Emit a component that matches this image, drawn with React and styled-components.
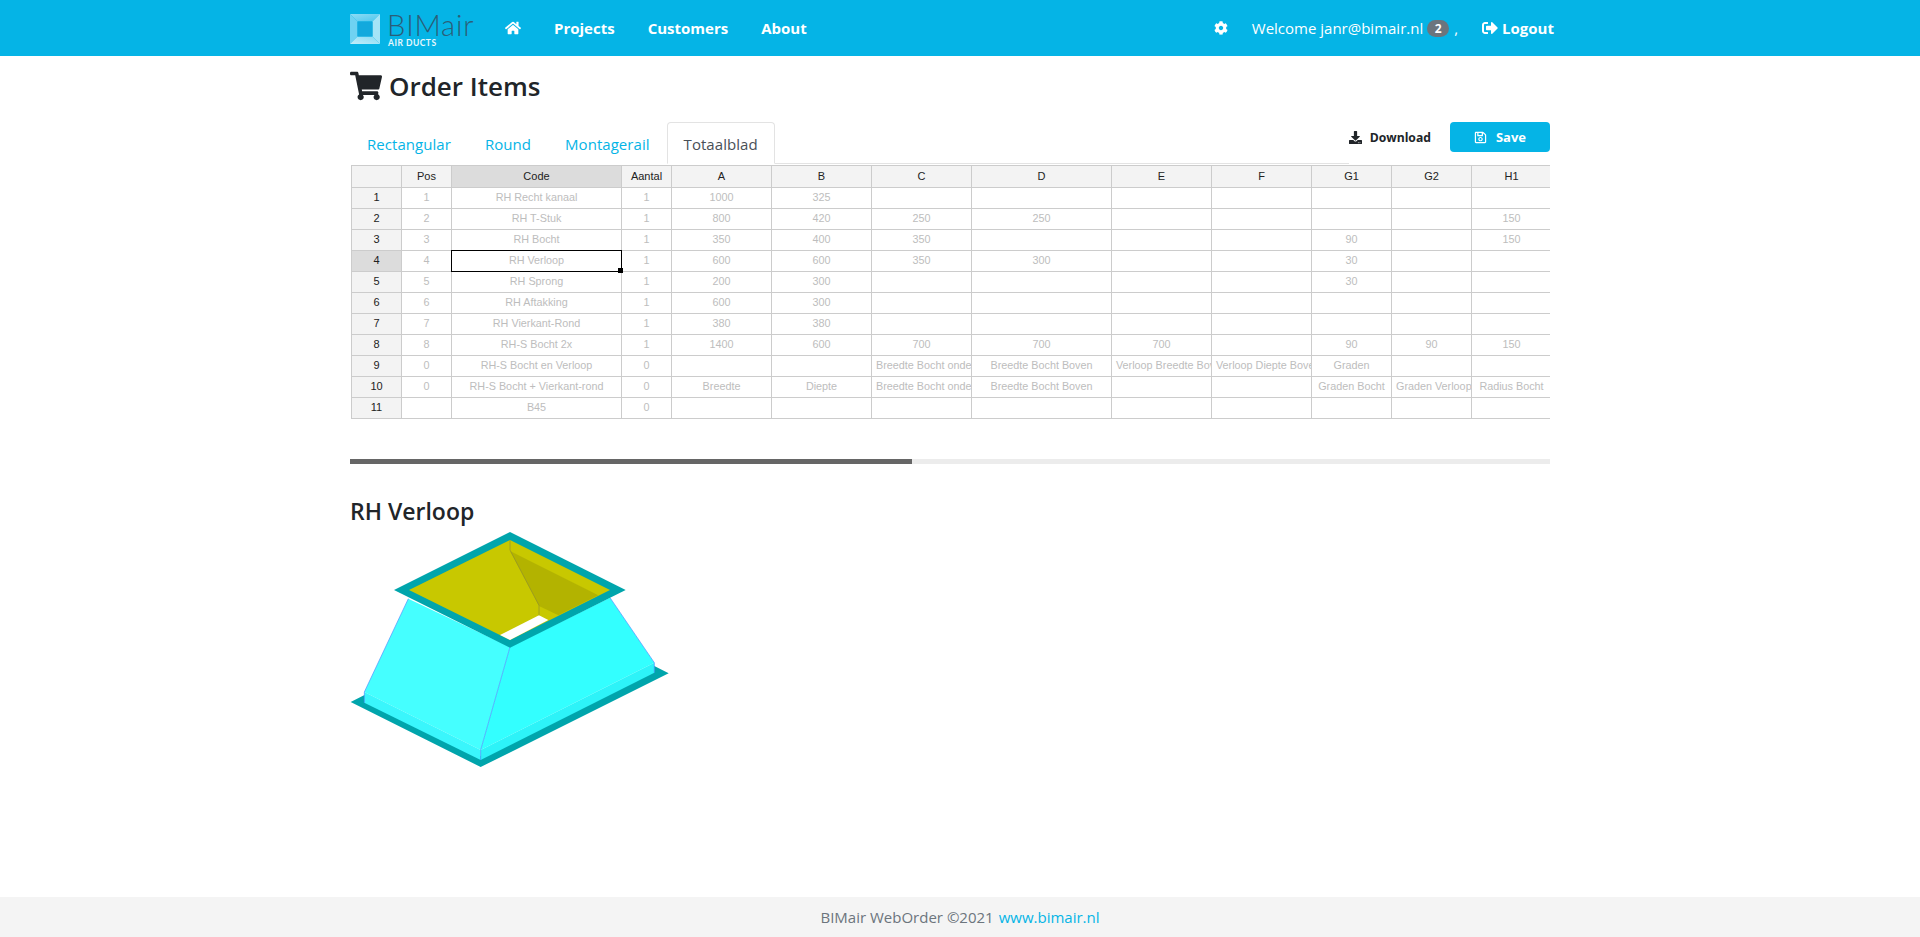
import React from 'react';
import styled, { createGlobalStyle } from 'styled-components';
import { FaHome, FaCog, FaShoppingCart, FaDownload, FaRegSave, FaSignOutAlt } from 'react-icons/fa';

const BLUE = '#05b4e6';

const GlobalStyle = createGlobalStyle`
  html, body { margin: 0; padding: 0; background: #fff; }
  body { font-family: "Open Sans", "Noto Sans", sans-serif; color: #212529; }
  * { box-sizing: border-box; }
`;

const Page = styled.div`
  min-height: 100vh;
  display: flex;
  flex-direction: column;
`;

const NavBar = styled.nav`
  height: 56px;
  background: ${BLUE};
  display: flex;
  align-items: center;
  justify-content: space-between;
  padding: 0 366px 0 350px;
  color: #fff;
`;

const NavGroup = styled.div`
  display: flex;
  align-items: center;
`;

const LogoBox = styled.div`
  display: flex;
  align-items: flex-start;
  width: 155px;
  height: 30px;
  gap: 7px;
  margin-top: 1px;
`;

const LogoText = styled.div`
  display: flex;
  flex-direction: column;
  margin-top: -3px;
`;

const LogoName = styled.span`
  font-family: Lato, sans-serif;
  font-weight: 300;
  font-size: 29px;
  line-height: 28px;
  letter-spacing: 0.8px;
  color: #2b5e78;
`;

const LogoSub = styled.span`
  font-family: Lato, sans-serif;
  font-weight: 700;
  font-size: 8.5px;
  line-height: 8px;
  letter-spacing: 0.5px;
  margin-left: 1px;
  color: #e6f8fd;
`;

const NavLink = styled.a`
  display: flex;
  align-items: center;
  font-size: 15px;
  font-weight: 700;
  color: #fff;
  margin-right: 33px;
  svg { display: block; }
`;

const Welcome = styled.span`
  font-size: 15px;
  display: flex;
  align-items: center;
  margin-left: 24px;
  margin-right: 24px;
`;

const Badge = styled.span`
  display: inline-block;
  width: 22px;
  height: 17px;
  line-height: 17px;
  border-radius: 9px;
  background: #6c757d;
  font-size: 12px;
  font-weight: 700;
  text-align: center;
  margin: 0 5px 0 4px;
`;

const Logout = styled.a`
  display: flex;
  align-items: center;
  gap: 4px;
  font-size: 15px;
  font-weight: 700;
`;

const Main = styled.main`
  flex: 1;
  width: 1200px;
  margin-left: 350px;
`;

const Title = styled.h1`
  margin: 10px 0 16px;
  height: 40px;
  display: flex;
  align-items: center;
  gap: 7px;
  font-size: 26px;
  font-weight: 600;
  line-height: 40px;
`;

const TabBar = styled.div`
  display: flex;
  align-items: flex-start;
  justify-content: space-between;
  height: 43px;
`;

const Tabs = styled.ul`
  list-style: none;
  margin: 0;
  padding: 0;
  width: 1005px;
  height: 42px;
  display: flex;
  border-bottom: 1px solid #e3e3e3;
`;

const Tab = styled.li`
  height: 42px;
  padding: 9px 16px 0;
  font-size: 15px;
  line-height: 24px;
  letter-spacing: 0.05px;
  color: ${(p) => (p.$active ? '#495057' : BLUE)};
  background: #fff;
  border: 1px solid ${(p) => (p.$active ? '#e3e3e3' : 'transparent')};
  border-bottom-color: ${(p) => (p.$active ? '#fff' : 'transparent')};
  border-radius: 4px 4px 0 0;
`;

const Actions = styled.div`
  display: flex;
  align-items: center;
  gap: 19px;
  height: 30px;
`;

const DownloadLink = styled.a`
  display: flex;
  align-items: center;
  gap: 8px;
  font-size: 12.2px;
  font-weight: 700;
  color: #212529;
`;

const SaveButton = styled.button`
  width: 100px;
  height: 30px;
  display: flex;
  align-items: center;
  justify-content: center;
  gap: 9px;
  border: 0;
  border-radius: 4px;
  background: ${BLUE};
  color: #fff;
  font-family: inherit;
  font-size: 13px;
  font-weight: 700;
`;

const GridClip = styled.div`
  width: 1200px;
  height: 254px;
  padding-left: 1px;
  overflow: hidden;
`;

const Grid = styled.table`
  table-layout: fixed;
  border-collapse: separate;
  border-spacing: 0;
  width: 1201px;
  font-family: "Liberation Sans", Arial, sans-serif;
  font-size: 10.8px;
`;

const HeadCell = styled.th`
  height: 23px;
  padding: 0 2px 2px;
  font-size: 11px;
  font-weight: 400;
  color: #222;
  background: ${(p) => (p.$hot ? '#dcdcdc' : '#f3f3f3')};
  border-top: 1px solid #ccc;
  border-right: 1px solid #ccc;
  border-bottom: 1px solid #ccc;
  &:first-child { border-left: 1px solid #ccc; }
`;

const RowHead = styled.th`
  height: 21px;
  padding: 0 0 2px;
  font-size: 11px;
  font-weight: 400;
  color: #222;
  background: ${(p) => (p.$hot ? '#dcdcdc' : '#f3f3f3')};
  border-left: 1px solid #ccc;
  border-right: 1px solid #ccc;
  border-bottom: 1px solid #ccc;
`;

const Cell = styled.td`
  position: relative;
  height: 21px;
  padding: 0 4px 2px;
  color: #bdbdbd;
  text-align: center;
  white-space: nowrap;
  overflow: hidden;
  border-right: 1px solid #ccc;
  border-bottom: 1px solid #ccc;
`;

const SelectedCell = styled(Cell)`
  overflow: visible;
  z-index: 1;
  &::before {
    content: '';
    position: absolute;
    left: -1px;
    top: -1px;
    right: -1px;
    bottom: -1px;
    border: 1px solid #000;
    pointer-events: none;
  }
  &::after {
    content: '';
    position: absolute;
    right: -2px;
    bottom: -2px;
    width: 5px;
    height: 5px;
    background: #000;
  }
`;

const ScrollTrack = styled.div`
  height: 5px;
  margin-top: 40px;
  background: #ececec;
`;

const ScrollThumb = styled.div`
  height: 5px;
  background: #666;
`;

const SectionTitle = styled.h2`
  margin: 31px 0 0;
  font-size: 23px;
  line-height: 32px;
  font-weight: 600;
`;

const Figure = styled.svg`
  display: block;
  width: 320px;
  height: 237px;
  margin-top: 4px;
`;

const Footer = styled.footer`
  height: 40px;
  background: #f4f4f4;
  display: flex;
  align-items: center;
  justify-content: center;
  gap: 5px;
  font-size: 15px;
  color: #6c757d;
`;

const FooterLink = styled.a`
  color: ${BLUE};
`;

const colWidths = [51, 50, 170, 50, 100, 100, 100, 140, 100, 100, 80, 80, 80];
const headers = ['', 'Pos', 'Code', 'Aantal', 'A', 'B', 'C', 'D', 'E', 'F', 'G1', 'G2', 'H1'];
const rows = [
  ['1', 'RH Recht kanaal', '1', '1000', '325'],
  ['2', 'RH T-Stuk', '1', '800', '420', '250', '250', '', '', '', '', '150'],
  ['3', 'RH Bocht', '1', '350', '400', '350', '', '', '', '90', '', '150'],
  ['4', 'RH Verloop', '1', '600', '600', '350', '300', '', '', '30'],
  ['5', 'RH Sprong', '1', '200', '300', '', '', '', '', '30'],
  ['6', 'RH Aftakking', '1', '600', '300'],
  ['7', 'RH Vierkant-Rond', '1', '380', '380'],
  ['8', 'RH-S Bocht 2x', '1', '1400', '600', '700', '700', '700', '', '90', '90', '150'],
  ['0', 'RH-S Bocht en Verloop', '0', '', '', 'Breedte Bocht onder', 'Breedte Bocht Boven', 'Verloop Breedte Boven', 'Verloop Diepte Boven', 'Graden'],
  ['0', 'RH-S Bocht + Vierkant-rond', '0', 'Breedte', 'Diepte', 'Breedte Bocht onder', 'Breedte Bocht Boven', '', '', 'Graden Bocht', 'Graden Verloop', 'Radius Bocht'],
  ['', 'B45', '0'],
];

const LogoMark = () => (
  <svg width="30" height="30" viewBox="0 0 30 30">
    <defs>
      <linearGradient id="lgTop" x1="0" y1="0" x2="1" y2="1">
        <stop offset="0" stopColor="#8fdcf5" />
        <stop offset="1" stopColor="#4cc7ee" />
      </linearGradient>
      <linearGradient id="lgBot" x1="0" y1="1" x2="1" y2="0">
        <stop offset="0" stopColor="#c4eefa" />
        <stop offset="1" stopColor="#86daf4" />
      </linearGradient>
    </defs>
    <polygon points="0,0 30,0 22.5,7.5 7.5,7.5" fill="url(#lgTop)" />
    <polygon points="0,0 7.5,7.5 7.5,22.5 0,30" fill="#6fd2f2" />
    <polygon points="30,0 30,30 22.5,22.5 22.5,7.5" fill="#a5e4f7" />
    <polygon points="0,30 7.5,22.5 22.5,22.5 30,30" fill="url(#lgBot)" />
    <rect x="7.5" y="7.5" width="15" height="15" fill="#12a9dd" />
  </svg>
);

// the duct drawing, coordinates read off the reference at 3x
const Duct = () => (
  <Figure viewBox="30 125 960 711">
    <polygon points="32,638 75,616 422,800 943,530 986,552 422,833" fill="#00a5ac" />
    <polygon points="205,328 510,473 422,782 73,608" fill="#45ffff" />
    <polygon points="73,608 422,782 422,812 73,640" fill="#3af6fc" />
    <polygon points="510,473 810,325 943,520 422,782" fill="#33ffff" />
    <polygon points="943,520 943,550 422,812 422,782" fill="#2df3f8" />
    <polyline points="205,328 73,608 73,640" fill="none" stroke="#4d8dff" strokeWidth="2" />
    <polyline points="810,325 943,520 943,550" fill="none" stroke="#4d8dff" strokeWidth="2" />
    <line x1="510" y1="473" x2="422" y2="782" stroke="#4d8dff" strokeWidth="2" />
    <line x1="422" y1="782" x2="422" y2="812" stroke="#4d8dff" strokeWidth="2" />
    <polygon points="510,128 857,302 510,475 162,302" fill="#00a5ac" />
    <polygon points="510,152 810,302 510,452 207,302" fill="#c8c800" />
    <polygon points="510,185 775,318 655,378 597,350" fill="#b3b300" />
    <polygon points="480,437 597,378 625,392 510,452" fill="#fff" />
    <polyline points="510,152 510,182 597,348 597,378" fill="none" stroke="#8f8f30" strokeWidth="2" />
  </Figure>
);

const App = () => (
  <Page>
    <GlobalStyle />
    <NavBar>
      <NavGroup>
        <LogoBox>
          <LogoMark />
          <LogoText>
            <LogoName>BIMair</LogoName>
            <LogoSub>AIR DUCTS</LogoSub>
          </LogoText>
        </LogoBox>
        <NavLink><FaHome size={16} /></NavLink>
        <NavLink>Projects</NavLink>
        <NavLink>Customers</NavLink>
        <NavLink>About</NavLink>
      </NavGroup>
      <NavGroup>
        <FaCog size={14} />
        <Welcome>
          Welcome janr@bimair.nl<Badge>2</Badge>,
        </Welcome>
        <Logout><FaSignOutAlt size={16} />Logout</Logout>
      </NavGroup>
    </NavBar>
    <Main>
      <Title><FaShoppingCart size={32} />Order Items</Title>
      <TabBar>
        <Tabs>
          <Tab>Rectangular</Tab>
          <Tab>Round</Tab>
          <Tab>Montagerail</Tab>
          <Tab $active>Totaalblad</Tab>
        </Tabs>
        <Actions>
          <DownloadLink><FaDownload size={13} />Download</DownloadLink>
          <SaveButton><FaRegSave size={13} />Save</SaveButton>
        </Actions>
      </TabBar>
      <GridClip>
        <Grid>
          <colgroup>
            {colWidths.map((w, i) => <col key={i} width={w} />)}
          </colgroup>
          <thead>
            <tr>
              {headers.map((h, i) => <HeadCell key={i} $hot={h === 'Code'}>{h}</HeadCell>)}
            </tr>
          </thead>
          <tbody>
            {rows.map((row, r) => (
              <tr key={r}>
                <RowHead $hot={r === 3}>{r + 1}</RowHead>
                {headers.slice(1).map((_, c) => (
                  r === 3 && c === 1
                    ? <SelectedCell key={c}>{row[c]}</SelectedCell>
                    : <Cell key={c}>{row[c]}</Cell>
                ))}
              </tr>
            ))}
          </tbody>
        </Grid>
      </GridClip>
      <ScrollTrack><ScrollThumb style={{ width: `${(562 / 1200) * 100}%` }} /></ScrollTrack>
      <SectionTitle>RH Verloop</SectionTitle>
      <Duct />
    </Main>
    <Footer>BIMair WebOrder ©2021 <FooterLink>www.bimair.nl</FooterLink></Footer>
  </Page>
);

export default App;
